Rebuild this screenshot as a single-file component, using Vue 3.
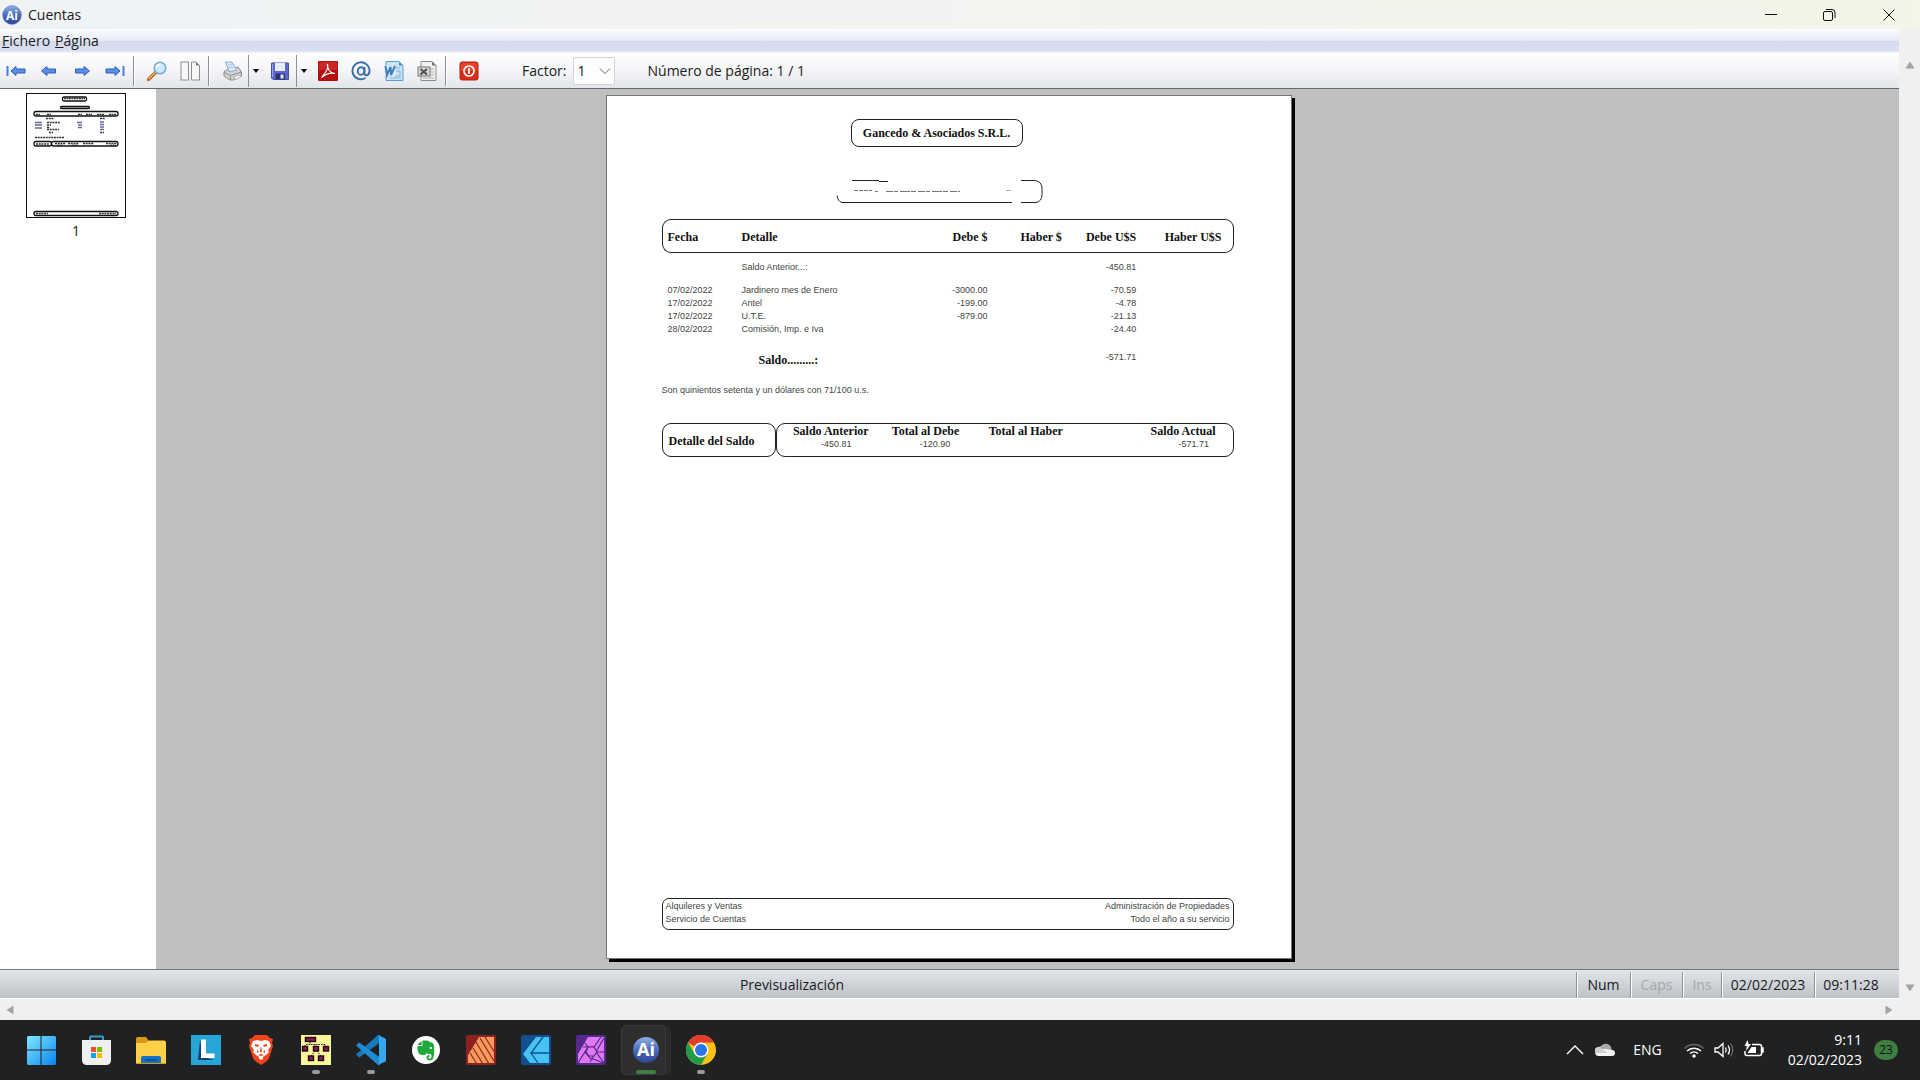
<template>
  <div class="screen">
    <header class="titlebar">
      <svg class="app-icon" viewBox="0 0 30 30">
        <defs>
          <linearGradient id="aiBall" x1="0" y1="0" x2="0" y2="1">
            <stop offset="0" stop-color="#8fb0e6" />
            <stop offset="0.5" stop-color="#4a6cbb" />
            <stop offset="1" stop-color="#2c4796" />
          </linearGradient>
        </defs>
        <circle cx="15" cy="15" r="14" fill="url(#aiBall)" stroke="#5671ad" />
        <text x="15" y="22" class="ai-text">Ai</text>
      </svg>
      <h1>Cuentas</h1>
      <div class="window-buttons">
        <button aria-label="Minimizar">
          <svg viewBox="0 0 14 14"><path d="M1 6.5h12" /></svg>
        </button>
        <button aria-label="Restaurar">
          <svg viewBox="0 0 14 14">
            <rect x="1.5" y="3.5" width="9" height="9" rx="1.5" />
            <path d="M4 1.5h6a3 3 0 0 1 3 3V10" />
          </svg>
        </button>
        <button aria-label="Cerrar">
          <svg viewBox="0 0 14 14"><path d="M1.5 1.5l11 11M12.5 1.5l-11 11" /></svg>
        </button>
      </div>
    </header>

    <div class="window">
      <div class="client">
        <nav class="menubar">
          <button><u>F</u>ichero</button>
          <button><u>P</u>ágina</button>
        </nav>

        <div class="toolbar">
          <button aria-label="Primera">
            <svg viewBox="0 0 20 20">
              <path class="arrow-bar" d="M1.5 5v10" />
              <path class="arrow" d="M5 10l5-4.5v2.5h9v4h-9v2.5z" />
            </svg>
          </button>
          <button aria-label="Anterior">
            <svg viewBox="0 0 20 20"><path class="arrow" d="M2.5 10L8 5.5V8h8.500v4H8v2.5z" /></svg>
          </button>
          <button aria-label="Siguiente">
            <svg viewBox="0 0 20 20"><path class="arrow" d="M17.5 10L12 5.5V8H3.500v4H12v2.5z" /></svg>
          </button>
          <button aria-label="Última">
            <svg viewBox="0 0 20 20">
              <path class="arrow" d="M15 10l-5-4.5V8H1v4h9v2.5z" />
              <path class="arrow-bar" d="M18.5 5v10" />
            </svg>
          </button>
          <i class="sep"></i>
          <button aria-label="Zoom">
            <svg viewBox="0 0 20 20">
              <path d="M1.5 18.5l7-7" stroke="#b56a2b" stroke-width="3.5" stroke-linecap="round" />
              <path d="M2 17.5l6-6" stroke="#f3ae62" stroke-width="1.5" stroke-linecap="round" />
              <circle cx="13" cy="7" r="5.8" fill="#cdeaff" stroke="#7fa9dd" stroke-width="1.6" />
              <path d="M9.5 7a4 4 0 0 1 4-3.5" fill="none" stroke="#fff" stroke-width="1.5" />
            </svg>
          </button>
          <button aria-label="Dos páginas">
            <svg viewBox="0 0 20 20">
              <rect x="1" y="1" width="7.5" height="18" fill="#f7f7f7" stroke="#8d8d8d" />
              <path d="M11.5 1H16l3.500 3.500V19h-8z" fill="#f7f7f7" stroke="#8d8d8d" />
              <path d="M16 1v3.500h3.500z" fill="#7a7a7a" />
            </svg>
          </button>
          <i class="sep"></i>
          <button class="split" aria-label="Imprimir">
            <svg viewBox="0 0 20 20">
              <path d="M2 10.500l5-2.500 9-2 3.500 5v3.500l-8 4.500H8l-6-4z" fill="#d3d3d3" stroke="#8e8e8e" />
              <path d="M3.500 1h6.500l4.500 8-7 2z" fill="#d6eafc" stroke="#86aed6" />
              <path d="M6 4h4M7 6.500h4.500" stroke="#a9c9ea" />
              <path d="M2 11.500l6.500 3 11-3.500M8.500 14.500v4" fill="none" stroke="#8e8e8e" />
              <path d="M11 16.500l5.500-2.500 3 1.500-5.500 3z" fill="#fafafa" stroke="#9a9a9a" stroke-width="0.8" />
            </svg>
          </button>
          <button class="drop" aria-label="Opciones de impresión">
            <svg viewBox="0 0 8 4"><path d="M1 0h6L4 4z" /></svg>
          </button>
          <button class="split" aria-label="Guardar">
            <svg viewBox="0 0 20 20">
              <path d="M1.5 2h17v16.500H3L1.500 17z" fill="#5b68cc" stroke="#4450a8" />
              <rect x="5" y="2" width="10" height="8" fill="#e6edfc" />
              <path d="M5.5 12.500H15v6H5.500z" fill="#2c3272" />
              <rect x="10.500" y="13.500" width="3" height="4" fill="#e4e7f5" />
              <path d="M2.500 3v13" stroke="#99a3ea" />
            </svg>
          </button>
          <button class="drop" aria-label="Opciones de guardado">
            <svg viewBox="0 0 8 4"><path d="M1 0h6L4 4z" /></svg>
          </button>
          <button aria-label="PDF">
            <svg viewBox="0 0 20 20">
              <rect width="20" height="20" rx="1" fill="#b30f0f" />
              <rect x="1" y="1" width="18" height="8" fill="#c92626" />
              <path d="M9 3c2.500 3 0 7.500-5.500 13.500M9.500 3c-.5 4.500 2 9 7.500 9.500-5-1.500-9 .5-13 3.500" fill="none" stroke="#fff" stroke-width="1.2" />
            </svg>
          </button>
          <button aria-label="Correo">
            <svg viewBox="0 0 20 20" fill="none" stroke="#3b6ea5">
              <path d="M14.500 17a8.500 8.500 0 1 1 4-7c0 5-5 5.500-5 2.500V6" stroke-width="1.9" />
              <ellipse cx="10" cy="10" rx="3.3" ry="3.8" stroke-width="1.9" />
            </svg>
          </button>
          <button aria-label="Word">
            <svg viewBox="0 0 20 20">
              <path d="M2 .5h13l4 4v15H2z" fill="#cde3f6" stroke="#5f9bd0" />
              <path d="M15 .5v4h4z" fill="#4b8cc8" />
              <path d="M12 7h4M12 10h4v5h-5M6 17h11" fill="none" stroke="#7fb0dc" />
              <path d="M.5 4.500h11v10H.5z" fill="#dceafa" />
              <path d="M1.500 5L3 14l3.500-8 .5 8 4-9" fill="none" stroke="#3d7ebd" stroke-width="2" />
            </svg>
          </button>
          <button aria-label="Excel">
            <svg viewBox="0 0 20 20">
              <path d="M4 .5h11l4 4v15H4z" fill="#f1f1f1" stroke="#8a8a8a" />
              <path d="M15 .5v4h4z" fill="#777" />
              <path d="M13 8h4M13 11h4M13 14h4M6 17h11" stroke="#a9a9a9" />
              <rect x="1" y="6" width="12" height="9" fill="#d6d6d6" stroke="#777" />
              <path d="M3.500 8l6.500 5.500M10 8l-6.500 5.500" stroke="#4d4d4d" stroke-width="2" />
            </svg>
          </button>
          <i class="sep"></i>
          <button aria-label="Salir">
            <svg viewBox="0 0 20 20">
              <rect x="1" y="1" width="18" height="18" rx="2" fill="#d92b16" stroke="#b32414" />
              <rect x="2" y="2" width="16" height="8" rx="1" fill="#e8432d" />
              <circle cx="10" cy="10" r="5" fill="none" stroke="#fff" stroke-width="1.7" />
              <path d="M10 7v6" stroke="#fff" stroke-width="1.7" />
            </svg>
          </button>

          <label for="factor">Factor:</label>
          <div class="select">
            <select id="factor" v-model="factor">
              <option v-for="n in 5" :key="n" :value="n">{{ n }}</option>
            </select>
            <svg viewBox="0 0 12 8"><path d="M1 1.500l5 5 5-5" /></svg>
          </div>
          <span class="page-number">Número de página: 1 / 1</span>
        </div>

        <div class="workspace">
          <aside>
            <svg class="thumb" viewBox="0 0 100 125">
              <rect x="0.5" y="0.5" width="99" height="124" fill="#fff" stroke="#111" />
              <g fill="none" stroke="#111" stroke-width="1.3">
                <rect x="36.500" y="4" width="24" height="4" rx="1.5" />
                <rect x="34.500" y="13.500" width="29" height="2" rx="1" />
                <rect x="8" y="18.500" width="84" height="4.500" rx="2" />
                <rect x="8" y="48.500" width="17.500" height="4.500" rx="2" />
                <rect x="25.500" y="48.500" width="66.500" height="4.500" rx="2" />
                <rect x="8" y="118.500" width="84" height="4" rx="2" />
              </g>
              <g stroke="#333" stroke-width="1.3">
                <path d="M38 5.500h21M10 21.500h4M21 21.500h4M52 21.500h4M60 21.500h6M71 21.500h7M83 21.500h7" stroke-dasharray="2 .5" />
                <path d="M20 25.500h8M74 25.500h5M21 29.500h13M21 32h4M21 34.500h3M21 36.500h12M23 39.500h4M74 39.500h4M9 44.500h29M10 51h13M29 50.500h11M42 50.500h11M57 50.500h11M80 50.500h11M31 52.500h6M46 52.500h6M84 52.500h6M10 120.500h12M73 120.500h17" stroke-dasharray="2 .7" />
                <path d="M9 29.500h7M9 32h7M9 35h7M51 29.500h5M52 32h4M52 34.500h4M74 29h4M74 31.500h4M74 34h4M74 36.500h4" stroke="#66669a" />
              </g>
            </svg>
            <span>1</span>
          </aside>

          <main>
            <article class="sheet">
              <h2>Gancedo &amp; Asociados S.R.L.</h2>
              <svg class="client-box" viewBox="0 0 207 24" fill="none" stroke="#222">
                <path d="M16 .5h27M185 .5h14q7 1 7 8v6q0 7-6 8h-15M176 22.500H6q-4-1-5-7" />
                <path d="M43 1.500h9" />
                <path d="M18 10.500h18M39 11.500h3" stroke="#777" stroke-dasharray="4 1" />
                <path d="M50 11.500h74" stroke="#777" stroke-dasharray="7 1 4 2 10 1 5 2" />
                <path d="M170 10.500h5" stroke="#aaa" />
              </svg>

              <table>
                <colgroup>
                  <col class="c-date" /><col class="c-detail" /><col class="c-debe" />
                  <col class="c-haber" /><col class="c-debe-u" /><col class="c-haber-u" />
                </colgroup>
                <thead>
                  <tr>
                    <th>Fecha</th>
                    <th>Detalle</th>
                    <th class="num">Debe $</th>
                    <th class="num">Haber $</th>
                    <th class="num">Debe U$S</th>
                    <th class="num">Haber U$S</th>
                  </tr>
                </thead>
                <tbody>
                  <tr class="opening">
                    <td></td>
                    <td>Saldo Anterior...:</td>
                    <td></td>
                    <td></td>
                    <td class="num">-450.81</td>
                    <td></td>
                  </tr>
                  <tr v-for="m in movements" :key="m.detail">
                    <td>{{ m.date }}</td>
                    <td>{{ m.detail }}</td>
                    <td class="num">{{ m.debe }}</td>
                    <td></td>
                    <td class="num">{{ m.debeUsd }}</td>
                    <td></td>
                  </tr>
                  <tr class="closing">
                    <td></td>
                    <td class="total">Saldo.........:</td>
                    <td></td>
                    <td></td>
                    <td class="num">-571.71</td>
                    <td></td>
                  </tr>
                </tbody>
              </table>

              <p class="words">Son quinientos setenta y un dólares con 71/100 u.s.</p>

              <section class="summary">
                <h3>Detalle del Saldo</h3>
                <dl>
                  <div v-for="s in summary" :key="s.label">
                    <dt>{{ s.label }}</dt>
                    <dd>{{ s.value }}</dd>
                  </div>
                </dl>
              </section>

              <footer>
                <p>Alquileres y Ventas<br />Servicio de Cuentas</p>
                <p>Administración de Propiedades<br />Todo el año a su servicio</p>
              </footer>
            </article>
          </main>
        </div>

        <div class="statusbar">
          <span class="status-text">Previsualización</span>
          <span class="cell num-lock">Num</span>
          <span class="cell caps off">Caps</span>
          <span class="cell ins off">Ins</span>
          <span class="cell date">02/02/2023</span>
          <span class="cell time">09:11:28</span>
        </div>
      </div>

      <div class="vscroll">
        <svg viewBox="0 0 12 12"><path d="M6 2.500l4.500 7h-9z" /></svg>
        <svg viewBox="0 0 12 12"><path d="M6 9.500l4.500-7h-9z" /></svg>
      </div>
    </div>

    <div class="hscroll">
      <svg viewBox="0 0 12 12"><path d="M2.500 6l7-4.500v9z" /></svg>
      <svg viewBox="0 0 12 12"><path d="M9.500 6l-7-4.500v9z" /></svg>
    </div>

    <div class="taskbar">
      <button aria-label="Inicio">
        <svg viewBox="0 0 30 30">
          <defs>
            <linearGradient id="win" x1="0" y1="0" x2="1" y2="1">
              <stop offset="0" stop-color="#7fe8ff" />
              <stop offset="1" stop-color="#0a84f0" />
            </linearGradient>
          </defs>
          <path d="M1 2.500Q1 1 2.500 1H14.500V14.500H1zM15.500 1H28.500Q30 1 30 2.500V14.500H15.500zM1 15.500H14.500V30H2.500Q1 30 1 28.500zM15.500 15.500H30V28.500Q30 30 28.500 30H15.500z" fill="url(#win)" />
        </svg>
      </button>
      <button aria-label="Tienda">
        <svg viewBox="0 0 30 30">
          <path d="M9 6V2.500Q9 1.500 10 1.500H21Q22 1.500 22 2.500V6" fill="none" stroke="#2f9fd8" stroke-width="2" />
          <path d="M1 5H30V25Q30 30 25 30H6Q1 30 1 25z" fill="#f0f0f0" />
          <path d="M10 12h5v5h-5z" fill="#f25022" />
          <path d="M16 12h5v5h-5z" fill="#7fba00" />
          <path d="M10 18h5v5h-5z" fill="#00a4ef" />
          <path d="M16 18h5v5h-5z" fill="#ffb900" />
        </svg>
      </button>
      <button aria-label="Explorador">
        <svg viewBox="0 0 30 30">
          <path d="M0 4Q0 2 2 2H10L13 6V12H0z" fill="#d99a13" />
          <path d="M0 8H10L13 5.500H28Q30 5.500 30 7.500V28H0z" fill="#ffcf48" />
          <path d="M5 28V23Q5 21 7 21H23Q25 21 25 23V28z" fill="#1471c4" />
          <path d="M9 25h12" stroke="#0b4c8c" stroke-width="1.5" />
          <path d="M0 28.500h30" stroke="#d99a13" />
        </svg>
      </button>
      <button aria-label="L">
        <svg viewBox="0 0 30 30">
          <rect width="30" height="30" fill="#27a5d6" />
          <path d="M9 5L7 25H23L13 22z" fill="#12406f" />
          <path d="M10 4.500h5V18.500h8.500V23H10z" fill="#fff" />
        </svg>
      </button>
      <button aria-label="Brave">
        <svg viewBox="0 0 30 30">
          <path d="M9 0H21L24 3 27 4 26 8 27 11 23 23Q22 26 15 30 8 26 7 23L3 11 4 8 3 4 6 3z" fill="#f4421c" />
          <path d="M7 6l4-1 4 1 4-1 4 1 2 5-3 4 1 2-3 3-3 2v2l-2 1-2-1v-2l-3-2-3-3 1-2-3-4z" fill="#fff" />
          <path d="M9 9l4 1-1 2-3-1zM21 9l-4 1 1 2 3-1zM15 11l-1 5 1 2 1-2zM11 15l2 2-2 1zM19 15l-2 2 2 1zM12 20l3-1 3 1-3 1z" fill="#f4421c" />
        </svg>
      </button>
      <button aria-label="Esquema" class="open">
        <svg viewBox="0 0 30 30">
          <rect width="30" height="30" fill="#fbf59a" />
          <path d="M9 7v3M5 9.500h19v3M14 9v4M4 10v3M14 16l-4 5M16 16l4 5" fill="none" stroke="#222" stroke-dasharray="1.5 1" />
          <g fill="#8d1457" stroke="#1b0b12" stroke-width="1.4">
            <rect x="4.500" y="2.500" width="10" height="4" />
            <rect x="1.500" y="11.500" width="5" height="4.500" />
            <rect x="12.500" y="11.500" width="5" height="4.500" />
            <rect x="22.500" y="11.500" width="5" height="4.500" />
            <rect x="7.500" y="21" width="5" height="4.500" />
            <rect x="17.500" y="21" width="5" height="4.500" />
          </g>
        </svg>
      </button>
      <button aria-label="VS Code" class="open">
        <svg viewBox="0 0 30 30">
          <path d="M0 19.500l2.500 2.500q.8.500 1.500 0L24 7.500V0h-2z" fill="#1678bd" />
          <path d="M0 10.500L2.500 8q.8-.5 1.500 0L24 22.500V30h-2z" fill="#1f8ad2" />
          <path d="M22 0l7 3.200q1 .5 1 1.500v20.600q0 1-1 1.500L22 30q1-.5 1-2V2q0-1.500-1-2z" fill="#36a9ee" />
        </svg>
      </button>
      <button aria-label="Evernote">
        <svg viewBox="0 0 30 30">
          <circle cx="15" cy="15" r="14" fill="#fff" />
          <path d="M11.500 5.500H16q2 0 3 1.500l2.500.8q1.500.7 1.700 4.200.3 6-.7 10.500-1 3-3.500 3-3.500 0-3.500-3 0-2.500 3-2.500v1.800q-1.200.2-1.200.9 0 1 1.500 1 1.700 0 1.700-2.700 0-2-1.500-2-2 .5-3-1-1 2-3.500 2-4 0-5-2-1.500-3-1-7h4q1 0 1-1z" fill="#1fa83a" />
          <path d="M6.500 10H10.500V6z" fill="#148a2b" />
          <path d="M18.300 13.500q.4-1.700 1.500-1.700 1.200 0 1.400 2.200-1.500-.6-2.900-.5z" fill="#fff" />
        </svg>
      </button>
      <button aria-label="Publisher">
        <svg viewBox="0 0 30 30">
          <rect width="30" height="30" rx="2" fill="#8e2120" />
          <path d="M13 2H28V28H2V20z" fill="#f79a5c" />
          <path d="M10 7l13 22M7 13l10 16M4 18l7 11M14 3l14 23M19 2l10 16" stroke="#8e2f22" stroke-width="1.3" />
        </svg>
      </button>
      <button aria-label="Designer">
        <svg viewBox="0 0 30 30">
          <rect width="30" height="30" rx="2" fill="#134f8c" />
          <path d="M15 2H28V28H9L2 19z" fill="#46c3f3" />
          <path d="M22 2L10 18H28M10 18l7 10" fill="none" stroke="#134f8c" stroke-width="1.3" />
        </svg>
      </button>
      <button aria-label="Photo">
        <svg viewBox="0 0 30 30">
          <rect width="30" height="30" rx="2" fill="#54288c" />
          <path d="M12 2H28V28H2V19z" fill="#e078f2" />
          <path d="M9 8l3 4M18 12H7M18 12l7-10M17.500 12l3.500 6M28 3L14 27M12 12L2 28M8 17h20M9 17l5 6 14 5M20 17l8 11" fill="none" stroke="#54288c" stroke-width="1.2" />
          <path d="M12 12h6l3 5-3 4h-5l-3-4z" fill="#e078f2" stroke="#54288c" stroke-width="1.2" />
        </svg>
      </button>
      <button aria-label="Cuentas" class="open active">
        <svg viewBox="0 0 30 30">
          <circle cx="15" cy="15" r="13" fill="url(#aiBall)" />
          <text x="15" y="21" class="ai-text">Ai</text>
        </svg>
      </button>
      <button aria-label="Chrome" class="open">
        <svg viewBox="0 0 30 30">
          <circle cx="15" cy="15" r="15" fill="#fbc116" />
          <path d="M15 15L2 7.500A15 15 0 0 1 28 7.500H15z" fill="#e33b2e" />
          <path d="M2 7.500A15 15 0 0 0 15 30L21.500 18.500 15 15 8.500 18.500z" fill="#229a48" />
          <circle cx="15" cy="15" r="7.5" fill="#fff" />
          <circle cx="15" cy="15" r="6" fill="#2a74e8" />
        </svg>
      </button>

      <div class="tray">
        <button class="t-up" aria-label="Mostrar ocultos">
          <svg viewBox="0 0 18 20" fill="none" stroke="#fff" stroke-width="1.4"><path d="M1 14l8-8 8 8" /></svg>
        </button>
        <svg class="t-cloud" viewBox="0 0 20 20">
          <path d="M3 11a4 4 0 0 1 3-5 6 6 0 0 1 10 1l1 4z" fill="#a9a9a9" />
          <path d="M4 16a3.500 3.500 0 0 1-.5-7L10 9l7 1a3 3 0 0 1 0 6z" fill="#f4f4f4" />
          <path d="M0 13a4 4 0 0 1 7-4l6 4z" fill="#cfcfcf" />
        </svg>
        <span class="lang">ENG</span>
        <svg class="t-wifi" viewBox="0 0 20 20" fill="none" stroke="#fff" stroke-width="1.5">
          <path d="M.5 8.500a13.500 13.500 0 0 1 19 0" stroke="#666" />
          <path d="M3 11a10 10 0 0 1 14 0M6 13.500a6 6 0 0 1 8 0" />
          <circle cx="10" cy="16" r="1" fill="#fff" />
        </svg>
        <svg class="t-sound" viewBox="0 0 20 20" fill="none" stroke="#fff" stroke-width="1.3">
          <path d="M1 8h3l5-4.500v13L4 12H1zM11.500 7.500q1.500 2.500 0 5M14 5.500q3 4.500 0 9" />
          <path d="M16.500 3.500q4.500 6.500 0 13" stroke="#666" />
        </svg>
        <svg class="t-battery" viewBox="0 0 20 20" fill="none" stroke="#fff" stroke-width="1.5">
          <path d="M8 4.500h7.500q2 0 2 2v7q0 2-2 2H3q-2 0-2-2V11M17.500 8H19v4h-1.500" />
          <path d="M7.500 7H12v6H3.500z" fill="#fff" stroke="none" />
          <path d="M3.500 0L.5 6h2.300L2 11l5-7H4.500z" fill="#fff" stroke="none" />
        </svg>
        <div class="clock">9:11<br />02/02/2023</div>
        <span class="badge">23</span>
      </div>
    </div>
  </div>
</template>

<script setup>
import { ref } from 'vue'

const factor = ref(1)

const movements = [
  { date: '07/02/2022', detail: 'Jardinero mes de Enero', debe: '-3000.00', debeUsd: '-70.59' },
  { date: '17/02/2022', detail: 'Antel', debe: '-199.00', debeUsd: '-4.78' },
  { date: '17/02/2022', detail: 'U.T.E.', debe: '-879.00', debeUsd: '-21.13' },
  { date: '28/02/2022', detail: 'Comisión, Imp. e Iva', debe: '', debeUsd: '-24.40' },
]

const summary = [
  { label: 'Saldo Anterior', value: '-450.81' },
  { label: 'Total al Debe', value: '-120.90' },
  { label: 'Total al Haber', value: '' },
  { label: 'Saldo Actual', value: '-571.71' },
]
</script>

<style>
body {
  margin: 0;
  background: #202122;
}
</style>

<style scoped>
* {
  box-sizing: border-box;
}

.screen {
  display: flex;
  flex-direction: column;
  min-height: 100vh;
  font: 14px/20px "Open Sans", sans-serif;
  color: #1b1b1b;
}

button {
  display: flex;
  align-items: center;
  justify-content: center;
  padding: 0;
  border: 0;
  background: none;
  font: inherit;
  color: inherit;
}

h1, h2, h3, p, dl, dd {
  margin: 0;
  font-size: inherit;
}

.ai-text {
  font: bold 18px "Open Sans", sans-serif;
  fill: #fff;
  text-anchor: middle;
}

/* title bar */
.titlebar {
  display: flex;
  align-items: center;
  height: 29px;
  padding-left: 2px;
  background: linear-gradient(to right, #f0f3f6, #f1f4f0 50%, #f3f5e8);
}

.app-icon {
  width: 20px;
  height: 20px;
}

.titlebar h1 {
  flex: 1;
  margin-left: 6px;
  font-weight: 400;
}

.window-buttons {
  display: flex;
  height: 100%;
}

.window-buttons button {
  width: 58px;
}

.window-buttons button:last-child {
  width: 62px;
}

.window-buttons svg {
  width: 14px;
  height: 14px;
  fill: none;
  stroke: #111;
}

.window {
  flex: 1;
  display: flex;
}

.client {
  flex: 1;
  display: flex;
  flex-direction: column;
  min-width: 0;
}

/* menu and toolbar */
.menubar {
  display: flex;
  gap: 5px;
  height: 24px;
  padding: 0 2px;
  background: linear-gradient(#fcfcff, #e6eaf5 48%, #d5dbee 52%, #d9e0f1 90%, #f4f6fb);
}

.toolbar {
  display: flex;
  align-items: center;
  height: 36px;
  border-bottom: 1px solid #69696c;
  background: linear-gradient(#fff, #f4f5f8 50%, #e2e5e9);
}

.toolbar button {
  width: 33px;
  height: 32px;
}

.toolbar button:first-child {
  width: 32px;
}

.toolbar button svg {
  width: 20px;
  height: 20px;
}

.toolbar .split {
  width: 34px;
  border-right: 1px solid #8d9095;
}

.toolbar .drop {
  width: 14px;
}

.toolbar .drop svg {
  width: 8px;
  height: 4px;
}

.sep {
  width: 2px;
  height: 30px;
  margin: 0 5px 0 2px;
  border-left: 1px solid #8d9095;
  background: #fff;
}

.arrow {
  fill: #5a90e6;
  stroke: #2c5cba;
}

.arrow-bar {
  stroke: #4a7fd8;
  stroke-width: 2;
}

.toolbar label {
  margin: 0 6px 0 37px;
}

.select {
  position: relative;
  width: 42px;
}

.select select {
  appearance: none;
  display: block;
  width: 100%;
  height: 28px;
  padding: 0 4px;
  border: 1px solid #d2d2d4;
  border-radius: 2px;
  background: #fdfdfd;
  font: inherit;
  color: inherit;
}

.select svg {
  position: absolute;
  top: 10px;
  right: 4px;
  width: 12px;
  height: 8px;
  fill: none;
  stroke: #666;
  pointer-events: none;
}

.page-number {
  margin-left: 33px;
}

/* preview area */
.workspace {
  flex: 1;
  display: flex;
  background: #c0c0c0;
}

aside {
  display: flex;
  flex-direction: column;
  align-items: center;
  gap: 3px;
  width: 156px;
  padding-top: 4px;
  padding-right: 4px;
  background: #fff;
}

.thumb {
  width: 100px;
  height: 125px;
}

main {
  flex: 1;
  display: flex;
  justify-content: center;
  padding: 6px 158px 10px 0;
}

.sheet {
  display: flex;
  flex-direction: column;
  width: 100%;
  max-width: 686px;
  padding: 23px 57px 28px 55px;
  border: 1px solid #777;
  background: #fff;
  box-shadow: 3px 3px 0 #000;
  font: 9px/13px "Liberation Sans", sans-serif;
  color: #444;
}

.sheet h2,
.sheet h3,
.sheet th,
.sheet dt,
.total {
  font: bold 12px/14px "Liberation Serif", serif;
  color: #111;
}

.sheet h2 {
  align-self: center;
  width: 172px;
  margin-right: 22px;
  padding: 6px 0;
  border: 1px solid #222;
  border-radius: 8px;
  text-align: center;
}

.client-box {
  align-self: center;
  width: 207px;
  height: 24px;
  margin: 33px 16px 15px 0;
}

table {
  width: 100%;
  table-layout: fixed;
  border-spacing: 0;
}

.c-date { width: 14%; }
.c-detail { width: 33%; }
.c-debe { width: 10%; }
.c-haber { width: 13%; }
.c-debe-u { width: 13%; }

th,
td {
  height: 13px;
  padding: 0;
  text-align: left;
}

th {
  height: 34px;
  padding-top: 2px;
  border: solid #222;
  border-width: 1px 0;
}

th:first-child {
  padding-left: 5px;
  border-left-width: 1px;
  border-radius: 9px 0 0 9px;
}

th:last-child {
  padding-right: 11px;
  border-right-width: 1px;
  border-radius: 0 9px 9px 0;
}

td:first-child {
  padding-left: 6px;
}

.num {
  text-align: right;
}

.opening td {
  height: 31px;
  padding-bottom: 3px;
}

.closing td {
  height: 48px;
  padding-bottom: 6px;
}

.closing .total {
  padding: 0 0 0 17px;
}

.summary {
  display: flex;
  height: 34px;
  margin-top: 26px;
}

.summary h3 {
  flex: 0 0 20%;
  padding: 10px 6px;
  border: 1px solid #222;
  border-radius: 9px;
}

.summary dl {
  flex: 1;
  display: grid;
  grid-template-columns: 99fr 97fr 162fr 82fr;
  padding-left: 16px;
  border: 1px solid #222;
  border-radius: 9px;
}

.summary dd {
  padding-left: 28px;
}

.sheet footer {
  display: flex;
  justify-content: space-between;
  margin-top: auto;
  padding: 1px 3px 3px;
  border: 1px solid #222;
  border-radius: 7px;
}

.sheet footer p:last-child {
  text-align: right;
}

/* status bar and scroll tracks */
.statusbar {
  display: flex;
  height: 30px;
  border-top: 1px solid #77777b;
  border-bottom: 1px solid #fff;
  background: linear-gradient(#e2e5e9, #ccd0d5 60%, #bec3c8);
  line-height: 29px;
  text-align: center;
}

.status-text {
  flex: 1;
  padding-left: 8px;
}

.cell {
  margin-top: 2px;
  border-left: 1px solid #8f9398;
  box-shadow: inset 1px 0 0 #fff;
  line-height: 26px;
}

.off {
  color: #a5a8ac;
}

.num-lock { width: 54px; }
.caps { width: 52px; }
.ins { width: 39px; }
.date { width: 93px; }

.time {
  width: 85px;
  padding-right: 12px;
}

.vscroll,
.hscroll {
  display: flex;
  align-items: center;
  justify-content: space-between;
  background: #f0f0f0;
}

.vscroll {
  flex-direction: column;
  width: 21px;
  padding: 30px 0 5px;
}

.hscroll {
  height: 21px;
  padding: 0 25px 0 4px;
}

.vscroll svg,
.hscroll svg {
  width: 12px;
  height: 12px;
  fill: #a3a3a3;
}

/* taskbar */
.taskbar {
  display: flex;
  align-items: center;
  height: 60px;
  padding: 0 22px 0 13px;
  background: #202122;
  color: #fff;
}

.taskbar > button {
  position: relative;
  width: 55px;
  height: 52px;
}

.taskbar > button > svg {
  width: 30px;
  height: 30px;
}

.open::after {
  content: "";
  position: absolute;
  bottom: 2px;
  width: 8px;
  height: 4px;
  border-radius: 2px;
  background: #9a9a9a;
}

.active::before {
  content: "";
  position: absolute;
  inset: 1px 7px 1px 3px;
  border: 1px solid #3b3b3b;
  border-radius: 5px;
  background: #2e2e2e;
  box-shadow: 5px 0 0 #2a2a2a;
}

.active svg {
  position: relative;
}

.active::after {
  width: 20px;
  background: #3f7f40;
}

.tray {
  display: flex;
  align-items: center;
  margin-left: auto;
}

.tray svg {
  display: block;
  width: 20px;
  height: 20px;
}

.t-up {
  margin-right: 10px;
}

.lang {
  margin: 0 22px 0 18px;
}

.t-sound {
  margin: 0 10px;
}

.clock {
  margin: 0 12px 0 24px;
  text-align: right;
}

.badge {
  width: 24px;
  height: 20px;
  border-radius: 10px;
  background: #3f7f40;
  color: #111;
  font-size: 12px;
  text-align: center;
}
</style>
